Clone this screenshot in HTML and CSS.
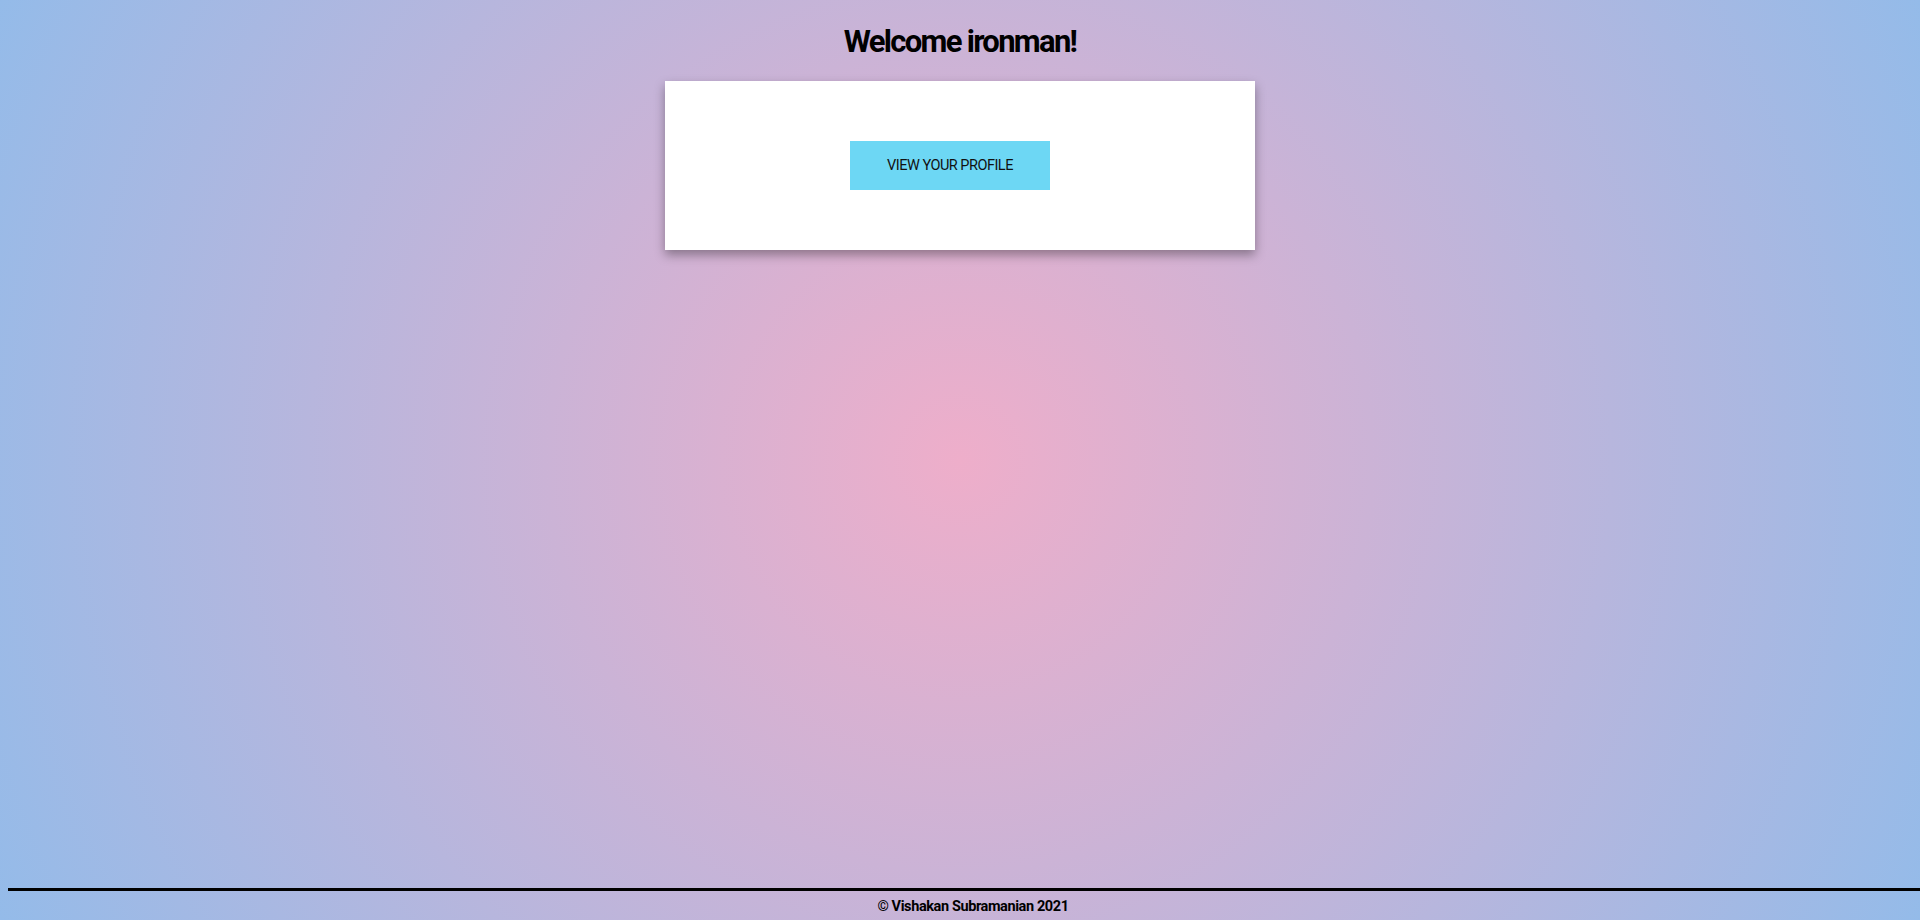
FILE: index.html
```html
<!DOCTYPE html>
<html lang="en">
<head>
<meta charset="utf-8">
<title>Welcome</title>
<link rel="stylesheet" href="styles.css">
</head>
<body>
<main class="main">
  <h1 class="title">Welcome ironman!</h1>
  <section class="card">
    <button class="btn" type="button">VIEW YOUR PROFILE</button>
  </section>
</main>
<footer class="footer">
  <p class="copy">© Vishakan Subramanian 2021</p>
</footer>
</body>
</html>
```

FILE: styles.css
```css
html {
  height: 100%;
}
body {
  margin: 0;
  min-height: 100vh;
  display: flex;
  flex-direction: column;
  background: radial-gradient(circle, #eeaeca 0%, #94bbe9 100%);
  font-family: Roboto, "Liberation Sans", sans-serif;
  color: #000;
}
.main {
  display: flex;
  flex-direction: column;
  align-items: center;
  flex: 1;
}
.title {
  margin: 22px 0 0;
  font-size: 31px;
  line-height: 40px;
  font-weight: 700;
  letter-spacing: -1.7px;
}
.card {
  margin-top: 19px;
  width: 590px;
  box-sizing: border-box;
  padding: 60px 0 60px 185px;
  background: #fff;
  box-shadow: 0 5px 10px rgba(0, 0, 0, 0.35);
}
.btn {
  display: block;
  width: 200px;
  height: 49px;
  border: none;
  background: #6dd7f4;
  color: #111;
  font-family: inherit;
  font-size: 14.5px;
  letter-spacing: -0.5px;
  padding: 0;
}
.footer {
  margin-left: 8px;
  border-top: 3px solid #000;
}
.copy {
  margin: 0;
  padding: 7px 0 4px 18px;
  text-align: center;
  font-size: 14.5px;
  font-weight: 700;
  letter-spacing: -0.4px;
  line-height: 18px;
}
```
